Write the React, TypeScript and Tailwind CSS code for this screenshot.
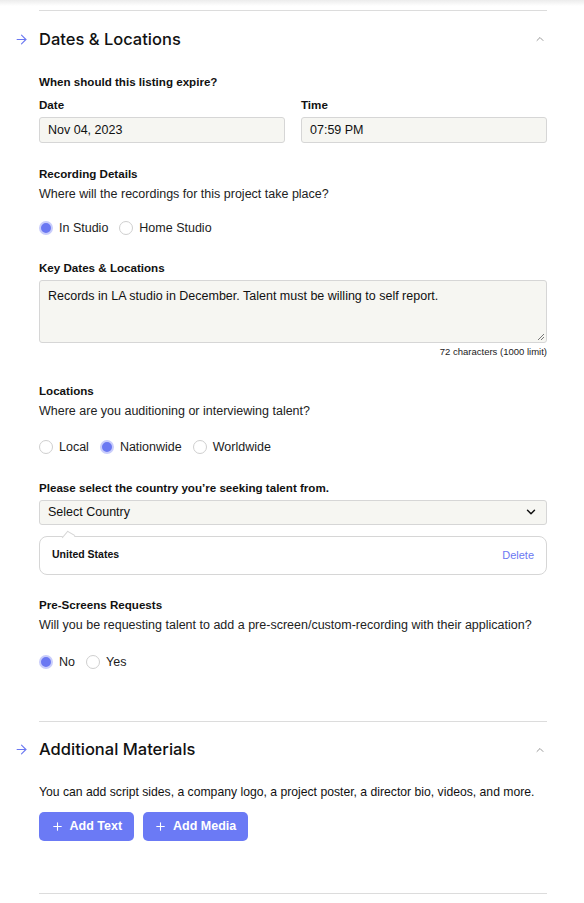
import { ChevronDown, ChevronUp, ArrowRight, Plus } from "lucide-react";

const font = { fontFamily: "'Liberation Sans', Arial, sans-serif" };
const headFont = { fontFamily: "Inter, 'Liberation Sans', sans-serif" };

const Radio = ({ label, checked }: { label: string; checked?: boolean }) => (
  <label className="flex items-center gap-[6px] mr-[11px]">
    {checked ? (
      <span className="w-[14px] h-[14px] rounded-full bg-[#6b78f2] border-2 border-[#c9cdfb] box-border" />
    ) : (
      <span className="w-[14px] h-[14px] rounded-full bg-white border border-[#cfcfcf] box-border" />
    )}
    <span className="text-[12.5px] text-[#1c1c1c]">{label}</span>
  </label>
);

const SectionHead = ({ title }: { title: string }) => (
  <div className="relative flex items-center justify-between h-[56px]">
    <ArrowRight className="absolute -left-[25px] w-[15px] h-[15px] text-[#6b78f2]" strokeWidth={1.75} />
    <h2 className="text-[16.5px] font-medium text-[#111]" style={headFont}>{title}</h2>
    <ChevronUp className="w-[12px] h-[12px] text-[#9a9a9a] mr-[1px]" strokeWidth={2} />
  </div>
);

const Label = ({ children }: { children: React.ReactNode }) => (
  <p className="text-[11.6px] font-bold text-[#111] leading-[16px]">{children}</p>
);

const Sub = ({ children }: { children: React.ReactNode }) => (
  <p className="text-[12.5px] text-[#222] leading-[18px] mt-[3px]">{children}</p>
);

const AddButton = ({ label }: { label: string }) => (
  <button className="h-[29px] px-[11.5px] rounded-[5px] bg-[#6b7af5] text-white text-[12.5px] font-bold flex items-center gap-[6px]">
    <Plus className="w-[13px] h-[13px]" strokeWidth={2} />
    {label}
  </button>
);

export default function App() {
  return (
    <div className="bg-white w-[584px] min-h-[903px] relative" style={font}>
      <div className="h-[6px] bg-gradient-to-b from-[#ececec] to-white" />
      <div className="ml-[39px] mr-[37px] pt-[4px]">
        <div className="border-t border-[#dcdcdc]" />
        <SectionHead title="Dates & Locations" />

        <div className="mt-[7px]">
          <Label>When should this listing expire?</Label>
          <div className="flex gap-[16px] mt-[7px]">
            <div className="flex-1">
              <Label>Date</Label>
              <div className="mt-[4px] h-[26px] rounded-[3px] border border-[#d6d6d6] bg-[#f6f6f2] flex items-center px-[8px] text-[12.5px] text-[#111]">
                Nov 04, 2023
              </div>
            </div>
            <div className="flex-1">
              <Label>Time</Label>
              <div className="mt-[4px] h-[26px] rounded-[3px] border border-[#d6d6d6] bg-[#f6f6f2] flex items-center px-[8px] text-[12.5px] text-[#111]">
                07:59 PM
              </div>
            </div>
          </div>
        </div>

        <div className="mt-[23px]">
          <Label>Recording Details</Label>
          <Sub>Where will the recordings for this project take place?</Sub>
          <div className="flex mt-[16px]">
            <Radio label="In Studio" checked />
            <Radio label="Home Studio" />
          </div>
        </div>

        <div className="mt-[22px]">
          <Label>Key Dates & Locations</Label>
          <div className="relative mt-[4px] h-[63px] rounded-[3px] border border-[#d6d6d6] bg-[#f6f6f2] px-[8px] pt-[6px] text-[12.5px] text-[#111]">
            Records in LA studio in December. Talent must be willing to self report.
            <svg className="absolute right-[1px] bottom-[1px]" width="8" height="8" viewBox="0 0 8 8">
              <path d="M7 1 L1 7 M7 4 L4 7" stroke="#777" strokeWidth="1" />
            </svg>
          </div>
          <p className="text-right text-[9.5px] text-[#222] mt-[2px]">72 characters (1000 limit)</p>
        </div>

        <div className="mt-[24px]">
          <Label>Locations</Label>
          <Sub>Where are you auditioning or interviewing talent?</Sub>
          <div className="flex mt-[18px]">
            <Radio label="Local" />
            <Radio label="Nationwide" checked />
            <Radio label="Worldwide" />
          </div>
        </div>

        <div className="mt-[23px]">
          <Label>Please select the country you’re seeking talent from.</Label>
          <div className="mt-[4px] h-[25px] rounded-[3px] border border-[#d6d6d6] bg-[#f6f6f2] flex items-center justify-between px-[8px] text-[12.5px] text-[#111]">
            <span>Select Country</span>
            <ChevronDown className="w-[14px] h-[14px] text-[#111]" strokeWidth={2.5} />
          </div>
          <div className="relative mt-[11px] h-[39px] rounded-[8px] border border-[#d6d6d6] bg-white flex items-center justify-between px-[12px]">
            <span className="absolute -top-[5px] left-[24px] w-[9px] h-[9px] bg-white border-l border-t border-[#d6d6d6] rotate-[30deg] skew-x-[-10deg]" />
            <span className="text-[10.5px] font-bold text-[#111]">United States</span>
            <span className="text-[11px] text-[#6b78f2]">Delete</span>
          </div>
        </div>

        <div className="mt-[22px]">
          <Label>Pre-Screens Requests</Label>
          <Sub>Will you be requesting talent to add a pre-screen/custom-recording with their application?</Sub>
          <div className="flex mt-[19px]">
            <Radio label="No" checked />
            <Radio label="Yes" />
          </div>
        </div>

        <div className="border-t border-[#dcdcdc] mt-[49px]" />
        <SectionHead title="Additional Materials" />
        <p className="text-[12.2px] text-[#111] mt-[5px] whitespace-nowrap">
          You can add script sides, a company logo, a project poster, a director bio, videos, and more.
        </p>
        <div className="flex gap-[9px] mt-[11px]">
          <AddButton label="Add Text" />
          <AddButton label="Add Media" />
        </div>
        <div className="border-t border-[#dcdcdc] mt-[52px]" />
      </div>
    </div>
  );
}
